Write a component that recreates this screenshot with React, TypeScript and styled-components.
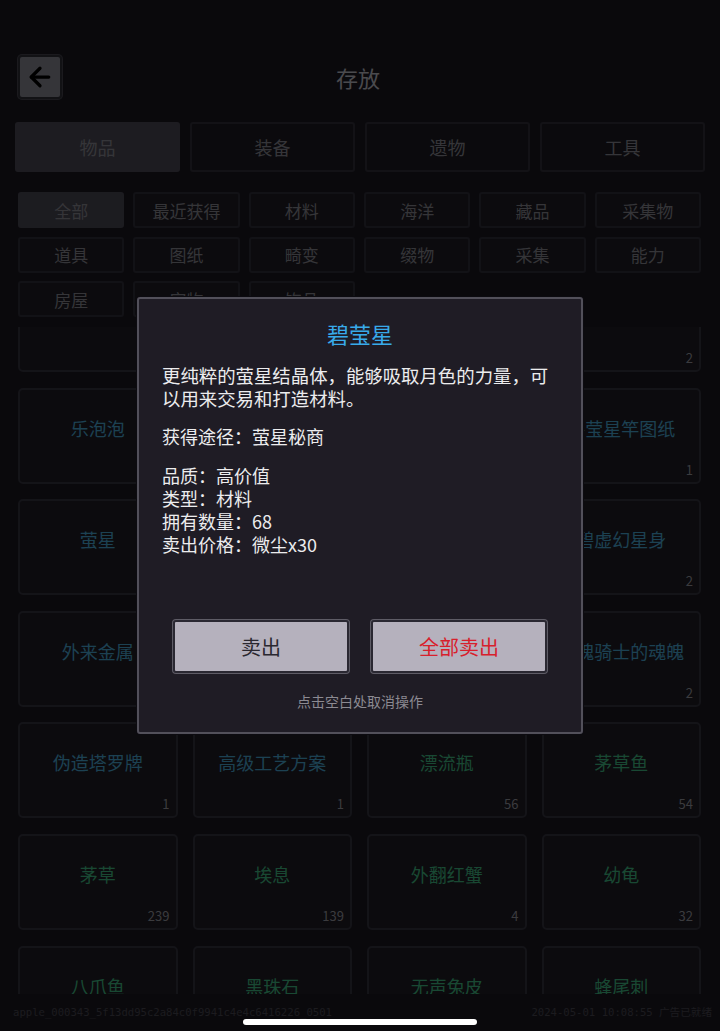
import React, { useLayoutEffect, useRef } from "react"
import styled, { createGlobalStyle } from "styled-components"
import { ArrowLeft } from "lucide-react"

const GlobalStyle = createGlobalStyle`
  html, body { margin: 0; padding: 0; background: #0a090d; }
  body { font-family: "Noto Sans CJK SC", "Noto Sans", sans-serif; }
  * { box-sizing: border-box; }
`

const TABS = ["物品", "装备", "遗物", "工具"]
const FILTERS = [
  "全部", "最近获得", "材料", "海洋", "藏品", "采集物",
  "道具", "图纸", "畸变", "缀物", "采集", "能力",
  "房屋", "宠物", "饰品",
]

type Rarity = "blue" | "green"
type Item = { name: string; count: number; rarity: Rarity }

const ITEMS: Item[] = [
  { name: "碧莹星", count: 68, rarity: "blue" },
  { name: "星光碎片", count: 3, rarity: "blue" },
  { name: "月影石", count: 5, rarity: "blue" },
  { name: "碧莹星竿", count: 2, rarity: "blue" },
  { name: "乐泡泡", count: 1, rarity: "blue" },
  { name: "星辰宝箱", count: 1, rarity: "blue" },
  { name: "幽光水晶", count: 1, rarity: "blue" },
  { name: "碧莹星竿图纸", count: 1, rarity: "blue" },
  { name: "萤星", count: 12, rarity: "blue" },
  { name: "深海珍珠", count: 3, rarity: "blue" },
  { name: "潮汐结晶", count: 6, rarity: "blue" },
  { name: "碧虚幻星身", count: 2, rarity: "blue" },
  { name: "外来金属", count: 4, rarity: "blue" },
  { name: "古老齿轮", count: 2, rarity: "blue" },
  { name: "星尘精华", count: 9, rarity: "blue" },
  { name: "幽魄骑士的魂魄", count: 2, rarity: "blue" },
  { name: "伪造塔罗牌", count: 1, rarity: "blue" },
  { name: "高级工艺方案", count: 1, rarity: "blue" },
  { name: "漂流瓶", count: 56, rarity: "green" },
  { name: "茅草鱼", count: 54, rarity: "green" },
  { name: "茅草", count: 239, rarity: "green" },
  { name: "埃息", count: 139, rarity: "green" },
  { name: "外翻红蟹", count: 4, rarity: "green" },
  { name: "幼龟", count: 32, rarity: "green" },
  { name: "八爪鱼", count: 18, rarity: "green" },
  { name: "黑珠石", count: 27, rarity: "green" },
  { name: "无声兔皮", count: 11, rarity: "green" },
  { name: "蜂尾刺", count: 40, rarity: "green" },
]

const App: React.FC = () => {
  const listRef = useRef<HTMLDivElement>(null)

  useLayoutEffect(() => {
    if (listRef.current) listRef.current.scrollTop = 51
  }, [])

  return (
    <>
      <GlobalStyle />
      <Page>
        <Header>
          <BackButton aria-label="返回">
            <ArrowLeft size={30} strokeWidth={2.6} color="#000" />
          </BackButton>
          <Title>存放</Title>
          <HeaderSpacer />
        </Header>

        <TabRow>
          {TABS.map((t, i) => (
            <Tab key={t} $active={i === 0}>{t}</Tab>
          ))}
        </TabRow>

        <FilterGrid>
          {FILTERS.map((f, i) => (
            <Chip key={f} $active={i === 0}>{f}</Chip>
          ))}
        </FilterGrid>

        <ItemList ref={listRef}>
          <ItemGrid>
            {ITEMS.map((it) => (
              <Card key={it.name}>
                <ItemName $rarity={it.rarity}>{it.name}</ItemName>
                <Count>{it.count}</Count>
              </Card>
            ))}
          </ItemGrid>
        </ItemList>

        <Footer>
          <DebugText>apple_000343_5f13dd95c2a84c0f9941c4e4c6416226_0501</DebugText>
          <DebugText>2024-05-01 10:08:55 广告已就绪</DebugText>
        </Footer>

        <Overlay>
          <Dialog>
            <DialogTitle>碧莹星</DialogTitle>
            <Description>更纯粹的萤星结晶体，能够吸取月色的力量，可以用来交易和打造材料。</Description>
            <Source>获得途径：萤星秘商</Source>
            <Stats>
              <div>品质：高价值</div>
              <div>类型：材料</div>
              <div>拥有数量：68</div>
              <div>卖出价格：微尘x30</div>
            </Stats>
            <ButtonRow>
              <SellButton>卖出</SellButton>
              <SellButton $danger>全部卖出</SellButton>
            </ButtonRow>
            <Hint>点击空白处取消操作</Hint>
          </Dialog>
        </Overlay>

        <HomeIndicator />
      </Page>
    </>
  )
}

const Page = styled.div`
  position: relative;
  width: 720px;
  height: 1031px;
  overflow: hidden;
  background: #1a1820;
  display: flex;
  flex-direction: column;
  padding-top: 55px;
`

const Header = styled.div`
  display: grid;
  grid-template-columns: 44px 1fr 44px;
  align-items: center;
  padding: 0 18px;
  height: 44px;
`

const BackButton = styled.button`
  width: 44px;
  height: 44px;
  padding: 0;
  display: flex;
  align-items: center;
  justify-content: center;
  background: #86858f;
  border: 2px solid #2e2d36;
  border-radius: 4px;
  box-shadow: 0 0 0 1px #44434c;
`

const Title = styled.div`
  text-align: center;
  font-size: 22px;
  color: #b8b8c0;
  transform: translateX(-2px);
`

const HeaderSpacer = styled.div``

const TabRow = styled.div`
  display: grid;
  grid-template-columns: repeat(4, 1fr);
  gap: 10px;
  padding: 0 15px;
  margin-top: 23px;
`

const Tab = styled.div<{ $active?: boolean }>`
  height: 50px;
  display: flex;
  align-items: center;
  justify-content: center;
  font-size: 18px;
  color: #86868e;
  background: ${(p) => (p.$active ? "#4a4854" : "#1c1a22")};
  border: 2px solid ${(p) => (p.$active ? "#4a4854" : "#302e38")};
  border-radius: 3px;
`

const FilterGrid = styled.div`
  display: grid;
  grid-template-columns: repeat(6, 1fr);
  column-gap: 9px;
  row-gap: 8.5px;
  padding: 0 19px 0 18px;
  margin-top: 20px;
`

const Chip = styled.div<{ $active?: boolean }>`
  height: 36px;
  display: flex;
  align-items: center;
  justify-content: center;
  font-size: 17px;
  color: #84848c;
  background: ${(p) => (p.$active ? "#484652" : "#1e1c24")};
  border: 2px solid ${(p) => (p.$active ? "#484652" : "#2f2d37")};
  border-radius: 3px;
`

const ItemList = styled.div`
  margin-top: 10px;
  height: 667px;
  overflow: hidden;
`

const ItemGrid = styled.div`
  display: grid;
  grid-template-columns: repeat(4, 1fr);
  column-gap: 15px;
  row-gap: 15.6px;
  padding: 0 19px 20px 18px;
`

const Card = styled.div`
  position: relative;
  height: 96px;
  display: flex;
  justify-content: center;
  padding-top: 26px;
  background: #1e1c24;
  border: 2px solid #34323d;
  border-radius: 5px;
`

const ItemName = styled.div<{ $rarity: Rarity }>`
  font-size: 18px;
  line-height: 24px;
  white-space: nowrap;
  color: ${(p) => (p.$rarity === "blue" ? "#48a2cc" : "#3fb57f")};
`

const Count = styled.div`
  position: absolute;
  right: 6px;
  bottom: 3px;
  font-size: 13px;
  color: #93939b;
`

const Footer = styled.div`
  display: flex;
  justify-content: space-between;
  align-items: center;
  padding: 10px 8px 0 13px;
`

const DebugText = styled.div`
  font-family: "DejaVu Sans Mono", "Noto Sans CJK SC", monospace;
  font-size: 10.6px;
  color: #46444e;
`

const Overlay = styled.div`
  position: absolute;
  inset: 0;
  background: rgba(0, 0, 0, 0.6);
  display: flex;
  align-items: center;
  justify-content: center;
`

const Dialog = styled.div`
  width: 446px;
  display: flex;
  flex-direction: column;
  padding: 19px 23px 21px;
  background: #1f1c25;
  border: 2px solid #52505a;
  border-radius: 3px;
  box-shadow: 0 0 0 1px #0c0b10;
  color: #ececee;
`

const DialogTitle = styled.div`
  text-align: center;
  font-size: 22px;
  line-height: 30px;
  color: #38aaea;
`

const Description = styled.div`
  margin-top: 16px;
  font-size: 18.4px;
  line-height: 23px;
`

const Source = styled.div`
  margin-top: 15px;
  font-size: 18px;
  line-height: 23px;
`

const Stats = styled.div`
  margin-top: 16px;
  font-size: 18px;
  line-height: 23px;
`

const ButtonRow = styled.div`
  display: flex;
  justify-content: center;
  gap: 22px;
  margin-top: 64px;
`

const SellButton = styled.button<{ $danger?: boolean }>`
  width: 176px;
  height: 53px;
  font-family: inherit;
  font-size: 20px;
  color: ${(p) => (p.$danger ? "#d8202c" : "#2a2830")};
  background: #b5b1bd;
  border: 2px solid #2a2832;
  border-radius: 3px;
  box-shadow: 0 0 0 1px #5e5c66;
`

const Hint = styled.div`
  margin-top: 18px;
  text-align: center;
  font-size: 14px;
  line-height: 20px;
  color: #8c8a92;
`

const HomeIndicator = styled.div`
  position: absolute;
  left: 243px;
  bottom: 6px;
  width: 234px;
  height: 6px;
  border-radius: 3px;
  background: #ffffff;
`

export default App
